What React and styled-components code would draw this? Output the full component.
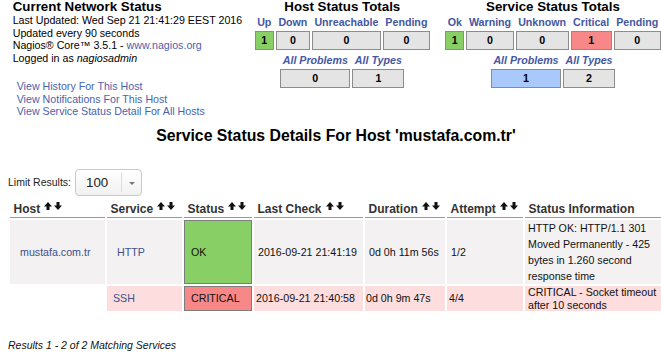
import React from 'react';
import styled, { createGlobalStyle } from 'styled-components';

const Global = createGlobalStyle`
  html, body { margin: 0; padding: 0; overflow: hidden; background: #fff; }
  body { font-family: "Liberation Sans", Arial, Helvetica, sans-serif; color: #000; }
`;

const Page = styled.div`
  width: 672px;
  box-sizing: border-box;
  padding: 0 8px;
`;

const Top = styled.div`
  display: flex;
  align-items: flex-start;
`;

const InfoCol = styled.div`
  margin-left: 4.7px;
  width: 241.6px;
  flex: none;
`;

const BigTitle = styled.div`
  font-weight: bold;
  font-size: 13.33px;
  line-height: 13px;
  white-space: nowrap;
`;

const InfoLines = styled.div`
  margin-top: 1px;
`;

const InfoLine = styled.div`
  font-size: 10.67px;
  line-height: 12.6px;
  white-space: nowrap;
`;

const Link = styled.a`
  color: #4a62ae;
  text-decoration: none;
`;

const LinkList = styled.div`
  margin-top: 15.6px;
  padding-left: 4px;
  display: flex;
  flex-direction: column;
`;

const Totals = styled.div`
  flex: none;
  width: ${(p) => p.$w}px;
  margin-right: ${(p) => p.$mr || 0}px;
  display: flex;
  flex-direction: column;
  align-items: center;
`;

const TotalsGrid = styled.div`
  display: grid;
  grid-template-columns: repeat(${(p) => p.$cols}, auto);
  column-gap: 2px;
  row-gap: 2.4px;
  margin-top: ${(p) => p.$mt}px;
`;

const TotalsLabel = styled.div`
  font-size: 10.67px;
  font-weight: bold;
  font-style: ${(p) => (p.$italic ? 'italic' : 'normal')};
  color: #4457a3;
  line-height: 12.6px;
  padding: 0 2.5px;
  text-align: center;
  white-space: nowrap;
`;

const CountBox = styled.div`
  height: 19px;
  box-sizing: border-box;
  border: 1px solid #8c8c8c;
  background: ${(p) => p.$bg || '#e4e4e4'};
  font-weight: bold;
  font-size: 10.67px;
  display: flex;
  align-items: center;
  justify-content: center;
`;

const MainTitle = styled.div`
  margin-top: 9.7px;
  font-weight: bold;
  font-size: 15.8px;
  line-height: 18px;
  text-align: center;
  white-space: nowrap;
`;

const LimitRow = styled.div`
  margin-top: 23.5px;
  display: flex;
  align-items: center;
  gap: 4px;
`;

const LimitLabel = styled.span`
  font-size: 10.5px;
  line-height: 12px;
  color: #222;
`;

const Select = styled.div`
  position: relative;
  width: 67px;
  height: 27px;
  box-sizing: border-box;
  border: 1px solid #c9c9c9;
  border-radius: 4px;
  background: linear-gradient(#ffffff, #f1f1f1);
  display: flex;
  align-items: center;
`;

const SelectValue = styled.span`
  font-size: 13.3px;
  color: #222;
  padding-left: 10px;
  width: 35px;
`;

const SelectDivider = styled.span`
  width: 1px;
  height: 19px;
  background: #dcdcdc;
`;

const Caret = styled.span`
  margin-left: 7px;
  margin-top: 3px;
  width: 0;
  height: 0;
  border-left: 3px solid transparent;
  border-right: 3px solid transparent;
  border-top: 3px solid #777;
`;

const Table = styled.table`
  margin-top: 1px;
  width: 100%;
  table-layout: fixed;
  border-collapse: separate;
  border-spacing: 2px;
`;

const Th = styled.th`
  box-sizing: border-box;
  width: ${(p) => (p.$w ? `${p.$w}px` : 'auto')};
  padding: 3px 3px 1px 3.5px;
  border-bottom: 1px solid #999;
  font-size: 12px;
  font-weight: bold;
  line-height: 14px;
  color: #333;
  text-align: left;
  white-space: nowrap;
  overflow: hidden;
`;

const Td = styled.td`
  box-sizing: border-box;
  padding: 0 2px 0 ${(p) => p.$pl ?? 3}px;
  background: ${(p) => p.$bg || 'transparent'};
  border: ${(p) => (p.$boxed ? '1px solid #7d7d7d' : 'none')};
  font-size: 10.67px;
  line-height: ${(p) => p.$lh || 12.7}px;
  vertical-align: middle;
  white-space: nowrap;
  color: #111;
`;

const CellLink = styled.a`
  color: #40508f;
  text-decoration: none;
`;

const SortIcons = styled.svg`
  margin-left: 4px;
  vertical-align: 3px;
`;

const Results = styled.div`
  margin-top: 25.7px;
  font-size: 10.5px;
  line-height: 12px;
  font-style: italic;
  color: #111;
`;

const Arrows = () => (
  <SortIcons width="18" height="8" viewBox="0 0 18 8">
    <path d="M4 0 L8 4.5 L5.5 4.5 L5.5 8 L2.5 8 L2.5 4.5 L0 4.5 Z" fill="#111" />
    <path d="M12.5 0 L15.5 0 L15.5 3.5 L18 3.5 L14 8 L10 3.5 L12.5 3.5 Z" fill="#111" />
  </SortIcons>
);

const hostLabels = [
  ['Up', '1', '#88d066'],
  ['Down', '0'],
  ['Unreachable', '0'],
  ['Pending', '0'],
];
const hostSub = [
  ['All Problems', '0'],
  ['All Types', '1'],
];
const svcLabels = [
  ['Ok', '1', '#88d066'],
  ['Warning', '0'],
  ['Unknown', '0'],
  ['Critical', '1', '#f88888'],
  ['Pending', '0'],
];
const svcSub = [
  ['All Problems', '1', '#a9c9fb'],
  ['All Types', '2'],
];

const TotalsTable = ({ items, italic, mt }) => (
  <TotalsGrid $cols={items.length} $mt={mt}>
    {items.map(([l]) => (
      <TotalsLabel key={'l' + l} $italic={italic}>{l}</TotalsLabel>
    ))}
    {items.map(([l, v, bg]) => (
      <CountBox key={'v' + l} $bg={bg}>{v}</CountBox>
    ))}
  </TotalsGrid>
);

const headers = [
  ['Host', 95],
  ['Service', 75],
  ['Status', 68],
  ['Last Check', 109],
  ['Duration', 80],
  ['Attempt', 76],
  ['Status Information', null],
];

export default function App() {
  return (
    <Page>
      <Global />
      <Top>
        <InfoCol>
          <BigTitle>Current Network Status</BigTitle>
          <InfoLines>
            <InfoLine>Last Updated: Wed Sep 21 21:41:29 EEST 2016</InfoLine>
            <InfoLine>Updated every 90 seconds</InfoLine>
            <InfoLine>
              Nagios® Core™ 3.5.1 - <Link href="#">www.nagios.org</Link>
            </InfoLine>
            <InfoLine>
              Logged in as <i>nagiosadmin</i>
            </InfoLine>
          </InfoLines>
          <LinkList>
            <InfoLine><Link href="#">View History For This Host</Link></InfoLine>
            <InfoLine><Link href="#">View Notifications For This Host</Link></InfoLine>
            <InfoLine><Link href="#">View Service Status Detail For All Hosts</Link></InfoLine>
          </LinkList>
        </InfoCol>
        <Totals $w={176} $mr={14.7}>
          <BigTitle>Host Status Totals</BigTitle>
          <TotalsTable items={hostLabels} mt={3} />
          <TotalsTable items={hostSub} italic mt={4} />
        </Totals>
        <Totals $w={216}>
          <BigTitle>Service Status Totals</BigTitle>
          <TotalsTable items={svcLabels} mt={3} />
          <TotalsTable items={svcSub} italic mt={4} />
        </Totals>
      </Top>

      <MainTitle>Service Status Details For Host 'mustafa.com.tr'</MainTitle>

      <LimitRow>
        <LimitLabel>Limit Results:</LimitLabel>
        <Select>
          <SelectValue>100</SelectValue>
          <SelectDivider />
          <Caret />
        </Select>
      </LimitRow>

      <Table>
        <thead>
          <tr>
            {headers.map(([h, w]) => (
              <Th key={h} $w={w}>
                {h}
                {h !== 'Status Information' && <Arrows />}
              </Th>
            ))}
          </tr>
        </thead>
        <tbody>
          <tr>
            <Td $bg="#f3f1f1" $pl={10}><CellLink href="#">mustafa.com.tr</CellLink></Td>
            <Td $bg="#f3f1f1" $pl={10}><CellLink href="#">HTTP</CellLink></Td>
            <Td $bg="#88d066" $boxed $pl={6}>OK</Td>
            <Td $bg="#f3f1f1" $pl={4}>2016-09-21 21:41:19</Td>
            <Td $bg="#f3f1f1" $pl={4}>0d 0h 11m 56s</Td>
            <Td $bg="#f3f1f1" $pl={4}>1/2</Td>
            <Td $bg="#f3f1f1" $pl={3} $lh={16}>
              HTTP OK: HTTP/1.1 301<br />
              Moved Permanently - 425<br />
              bytes in 1.260 second<br />
              response time
            </Td>
          </tr>
          <tr>
            <Td />
            <Td $bg="#fddddd" $pl={6}><CellLink href="#">SSH</CellLink></Td>
            <Td $bg="#f88888" $boxed $pl={6}>CRITICAL</Td>
            <Td $bg="#fddddd" $pl={2}>2016-09-21 21:40:58</Td>
            <Td $bg="#fddddd" $pl={1}>0d 0h 9m 47s</Td>
            <Td $bg="#fddddd" $pl={2}>4/4</Td>
            <Td $bg="#fddddd" $pl={3}>
              CRITICAL - Socket timeout<br />
              after 10 seconds
            </Td>
          </tr>
        </tbody>
      </Table>

      <Results>Results 1 - 2 of 2 Matching Services</Results>
    </Page>
  );
}
